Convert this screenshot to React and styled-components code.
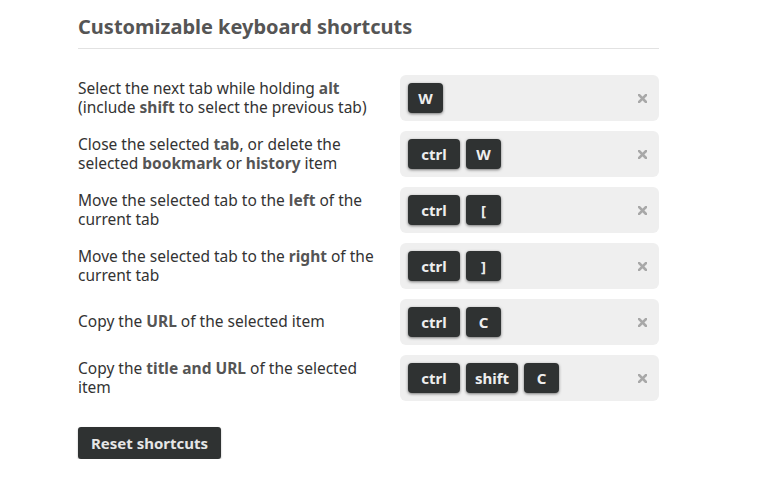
import React from "react";
import styled, { createGlobalStyle } from "styled-components";

const Global = createGlobalStyle`
  html, body { margin: 0; padding: 0; background: #fff; }
  body { font-family: "Noto Sans", "Open Sans", sans-serif; color: #333; }
`;

const Page = styled.div`
  width: 581px;
  margin-left: 78px;
  padding-top: 12px;
`;

const Heading = styled.h1`
  margin: 0;
  font-size: 20px;
  font-weight: 700;
  color: #555;
  line-height: 30px;
  padding-bottom: 6px;
  border-bottom: 1px solid #e2e2e2;
`;

const List = styled.div`
  display: flex;
  flex-direction: column;
  gap: 10px;
  margin-top: 26px;
`;

const Row = styled.div`
  display: flex;
  align-items: center;
  justify-content: space-between;
`;

const Label = styled.div`
  width: 300px;
  font-size: 15.5px;
  line-height: 19.5px;
  color: #333;
  b { font-weight: 700; color: #555; }
`;

const Box = styled.div`
  width: 259px;
  height: 46px;
  box-sizing: border-box;
  background: #efefef;
  border-radius: 6px;
  display: flex;
  align-items: center;
  padding: 0 12px 0 8px;
  gap: 6px;
`;

const Key = styled.span`
  min-width: ${p => (p.wide ? 52 : 35)}px;
  height: 30px;
  box-sizing: border-box;
  padding: 0 8px;
  background: #2f3232;
  border-radius: 4px;
  box-shadow: 0 1px 3px rgba(0,0,0,0.5);
  color: #eee;
  font-weight: 700;
  font-size: 15px;
  display: inline-flex;
  align-items: center;
  justify-content: center;
`;

const Clear = styled.svg`
  margin-left: auto;
  width: 9px;
  height: 9px;
  stroke: #a8a8a8;
  stroke-width: 2.6;
  stroke-linecap: square;
`;

const Button = styled.button`
  margin-top: 26px;
  height: 32px;
  padding: 0 13px;
  background: #2f3232;
  color: #e6e6e6;
  border: none;
  border-radius: 3px;
  font-family: inherit;
  font-size: 15px;
  font-weight: 700;
  box-shadow: 0 1px 2px rgba(0,0,0,0.3);
`;

const rows = [
  { label: <>Select the next tab while holding <b>alt</b><br />(include <b>shift</b> to select the previous tab)</>, keys: ["W"] },
  { label: <>Close the selected <b>tab</b>, or delete the selected <b>bookmark</b> or <b>history</b> item</>, keys: ["ctrl", "W"] },
  { label: <>Move the selected tab to the <b>left</b> of the current tab</>, keys: ["ctrl", "["] },
  { label: <>Move the selected tab to the <b>right</b> of the current tab</>, keys: ["ctrl", "]"] },
  { label: <>Copy the <b>URL</b> of the selected item</>, keys: ["ctrl", "C"] },
  { label: <>Copy the <b>title and URL</b> of the selected item</>, keys: ["ctrl", "shift", "C"] },
];

export default function App() {
  return (
    <>
      <Global />
      <Page>
        <Heading>Customizable keyboard shortcuts</Heading>
        <List>
          {rows.map((r, i) => (
            <Row key={i}>
              <Label>{r.label}</Label>
              <Box>
                {r.keys.map(k => (
                  <Key key={k} wide={k.length > 1}>{k}</Key>
                ))}
                <Clear viewBox="0 0 9 9" aria-label="clear">
                  <path d="M1 1L8 8M8 1L1 8" />
                </Clear>
              </Box>
            </Row>
          ))}
        </List>
        <Button>Reset shortcuts</Button>
      </Page>
    </>
  );
}
